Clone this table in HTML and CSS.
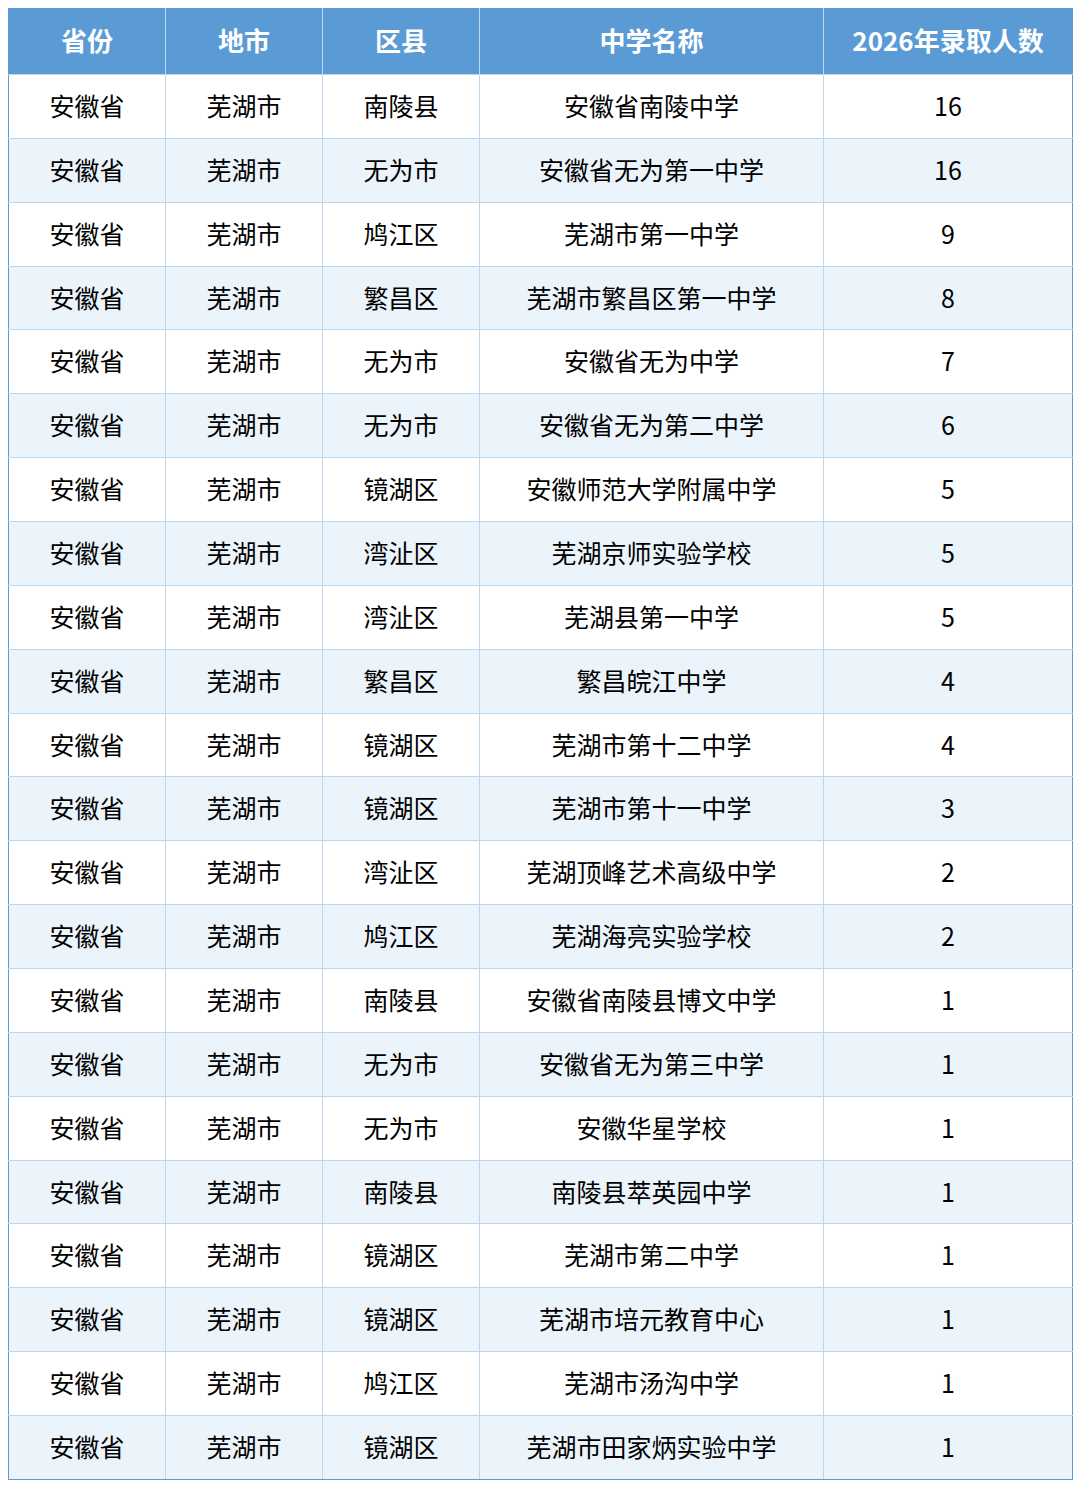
FILE: index.html
```html
<!DOCTYPE html>
<html lang="zh">
<head>
<meta charset="utf-8">
<link rel="stylesheet" href="styles.css">
</head>
<body>
<table class="tbl">
<colgroup><col class="c1"><col class="c2"><col class="c3"><col class="c4"><col class="c5"></colgroup>
<thead>
<tr><th>省份</th><th>地市</th><th>区县</th><th>中学名称</th><th>2026年录取人数</th></tr>
</thead>
<tbody>
<tr><td>安徽省</td><td>芜湖市</td><td>南陵县</td><td>安徽省南陵中学</td><td>16</td></tr>
<tr><td>安徽省</td><td>芜湖市</td><td>无为市</td><td>安徽省无为第一中学</td><td>16</td></tr>
<tr><td>安徽省</td><td>芜湖市</td><td>鸠江区</td><td>芜湖市第一中学</td><td>9</td></tr>
<tr><td>安徽省</td><td>芜湖市</td><td>繁昌区</td><td>芜湖市繁昌区第一中学</td><td>8</td></tr>
<tr><td>安徽省</td><td>芜湖市</td><td>无为市</td><td>安徽省无为中学</td><td>7</td></tr>
<tr><td>安徽省</td><td>芜湖市</td><td>无为市</td><td>安徽省无为第二中学</td><td>6</td></tr>
<tr><td>安徽省</td><td>芜湖市</td><td>镜湖区</td><td>安徽师范大学附属中学</td><td>5</td></tr>
<tr><td>安徽省</td><td>芜湖市</td><td>湾沚区</td><td>芜湖京师实验学校</td><td>5</td></tr>
<tr><td>安徽省</td><td>芜湖市</td><td>湾沚区</td><td>芜湖县第一中学</td><td>5</td></tr>
<tr><td>安徽省</td><td>芜湖市</td><td>繁昌区</td><td>繁昌皖江中学</td><td>4</td></tr>
<tr><td>安徽省</td><td>芜湖市</td><td>镜湖区</td><td>芜湖市第十二中学</td><td>4</td></tr>
<tr><td>安徽省</td><td>芜湖市</td><td>镜湖区</td><td>芜湖市第十一中学</td><td>3</td></tr>
<tr><td>安徽省</td><td>芜湖市</td><td>湾沚区</td><td>芜湖顶峰艺术高级中学</td><td>2</td></tr>
<tr><td>安徽省</td><td>芜湖市</td><td>鸠江区</td><td>芜湖海亮实验学校</td><td>2</td></tr>
<tr><td>安徽省</td><td>芜湖市</td><td>南陵县</td><td>安徽省南陵县博文中学</td><td>1</td></tr>
<tr><td>安徽省</td><td>芜湖市</td><td>无为市</td><td>安徽省无为第三中学</td><td>1</td></tr>
<tr><td>安徽省</td><td>芜湖市</td><td>无为市</td><td>安徽华星学校</td><td>1</td></tr>
<tr><td>安徽省</td><td>芜湖市</td><td>南陵县</td><td>南陵县萃英园中学</td><td>1</td></tr>
<tr><td>安徽省</td><td>芜湖市</td><td>镜湖区</td><td>芜湖市第二中学</td><td>1</td></tr>
<tr><td>安徽省</td><td>芜湖市</td><td>镜湖区</td><td>芜湖市培元教育中心</td><td>1</td></tr>
<tr><td>安徽省</td><td>芜湖市</td><td>鸠江区</td><td>芜湖市汤沟中学</td><td>1</td></tr>
<tr><td>安徽省</td><td>芜湖市</td><td>镜湖区</td><td>芜湖市田家炳实验中学</td><td>1</td></tr>
</tbody>
</table>
</body>
</html>
```
FILE: styles.css
```css
html, body {
  margin: 0;
  padding: 0;
  background: #ffffff;
}
body {
  padding: 8px;
  font-family: "Noto Sans CJK SC", "Noto Sans", sans-serif;
}
.tbl {
  width: 1064px;
  border-collapse: collapse;
  table-layout: fixed;
  border: 1px solid #5b9bd5;
}
.c1, .c2, .c3 { width: 157px; }
.c4 { width: 344px; }
.c5 { width: 249px; }
.tbl th {
  background: #5b9bd5;
  color: #ffffff;
  font-weight: bold;
  font-size: 26px;
  line-height: 30px;
  height: 62px;
  padding: 0 0 3px;
  text-align: center;
  vertical-align: middle;
  border: 1px solid #bdd7ee;
  border-top-color: #5b9bd5;
}
.tbl td {
  font-size: 25px;
  line-height: 30px;
  color: #000000;
  height: 59.86px;
  padding: 0 0 3px;
  text-align: center;
  vertical-align: middle;
  border: 1px solid #bdd7ee;
}
.tbl tbody tr:nth-child(even) td {
  background: #ebf3fb;
}
.tbl tr > :first-child { border-left-color: #5b9bd5; }
.tbl tr > :last-child { border-right-color: #5b9bd5; }
.tbl tbody tr:last-child td { border-bottom-color: #5b9bd5; }
```
